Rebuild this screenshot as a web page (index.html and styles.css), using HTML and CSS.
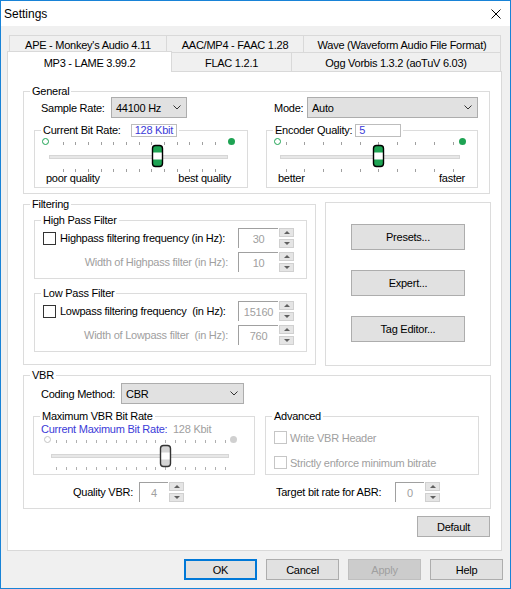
FILE: index.html
```html
<!DOCTYPE html>
<html>
<head>
<meta charset="utf-8">
<title>Settings</title>
<link rel="stylesheet" href="styles.css">
</head>
<body>
<div class="window">
  <div class="titlebar">
    <span class="title">Settings</span>
    <svg class="close" viewBox="0 0 10 10"><path d="M0.5 0.5L9.5 9.5M9.5 0.5L0.5 9.5" stroke="#000" stroke-width="1" fill="none"/></svg>
  </div>
  <div class="body">
    <div class="tabs">
      <div class="tabrow back">
        <div class="tab t-ape">APE - Monkey's Audio 4.11</div>
        <div class="tab t-aac">AAC/MP4 - FAAC 1.28</div>
        <div class="tab t-wave">Wave (Waveform Audio File Format)</div>
      </div>
      <div class="tabrow front">
        <div class="tab sel t-mp3">MP3 - LAME 3.99.2</div>
        <div class="tab t-flac">FLAC 1.2.1</div>
        <div class="tab t-ogg">Ogg Vorbis 1.3.2 (aoTuV 6.03)</div>
      </div>
    </div>

    <div class="panel">
      <div class="group g-general">
        <div class="legend">General</div>
        <div class="gen-grid">
          <div class="field">
            <span class="lbl l-sample">Sample Rate:</span>
            <div class="combo c-sample"><span>44100 Hz</span><svg class="chev" viewBox="0 0 8 5"><path d="M0.5 0.5L4 4L7.5 0.5" stroke="#333" fill="none"/></svg></div>
          </div>
          <div class="field">
            <span class="lbl l-mode">Mode:</span>
            <div class="combo c-mode"><span>Auto</span><svg class="chev" viewBox="0 0 8 5"><path d="M0.5 0.5L4 4L7.5 0.5" stroke="#333" fill="none"/></svg></div>
          </div>

          <div class="group sub g-bitrate">
            <div class="legend"><span class="leg-l1">Current Bit Rate:</span><span class="valbox vb-rate">128 Kbit</span></div>
            <svg class="slider" width="211" height="36" viewBox="0 0 211 36">
              <circle cx="10.5" cy="4.5" r="3" fill="none" stroke="#1ea353"/>
              <circle cx="196.5" cy="4.5" r="3.5" fill="#1ea353"/>
              <path d="M28.5 5v3M40.5 5v3M53.5 5v3M66.5 5v3M78.5 5v3M91.5 5v3M104.5 5v3M116.5 5v3M129.5 5v3M142.5 5v3M154.5 5v3M167.5 5v3M180.5 5v3" stroke="#a0a0a0"/>
              <path d="M28.5 32v3M40.5 32v3M53.5 32v3M66.5 32v3M78.5 32v3M91.5 32v3M104.5 32v3M116.5 32v3M129.5 32v3M142.5 32v3M154.5 32v3M167.5 32v3M180.5 32v3" stroke="#a0a0a0"/>
              <rect x="14.5" y="18.5" width="178" height="3" fill="#e7e7e7" stroke="#d6d6d6"/>
              <g transform="translate(117.5 8.5)">
                <rect width="10" height="21" rx="3" fill="#fff"/>
                <path d="M0 7V3a3 3 0 0 1 3-3h4a3 3 0 0 1 3 3v4z" fill="#1ea353"/>
                <path d="M0 14v4a3 3 0 0 0 3 3h4a3 3 0 0 0 3-3v-4z" fill="#1ea353"/>
                <rect width="10" height="21" rx="3" fill="none" stroke="#000" stroke-width="1.4"/>
              </g>
            </svg>
            <div class="slabels sl-left"><span>poor quality</span><span>best quality</span></div>
          </div>

          <div class="group sub g-enc">
            <div class="legend"><span>Encoder Quality:</span><span class="valbox vb-enc">5</span></div>
            <svg class="slider" width="209" height="36" viewBox="0 0 209 36">
              <circle cx="10.5" cy="4.5" r="3" fill="none" stroke="#1ea353"/>
              <circle cx="195.5" cy="4.5" r="3.5" fill="#1ea353"/>
              <path d="M19.5 5v3M37.5 5v3M56.5 5v3M74.5 5v3M93.5 5v3M111.5 5v3M130.5 5v3M148.5 5v3M167.5 5v3M186.5 5v3" stroke="#a0a0a0"/>
              <path d="M19.5 32v3M37.5 32v3M56.5 32v3M74.5 32v3M93.5 32v3M111.5 32v3M130.5 32v3M148.5 32v3M167.5 32v3M186.5 32v3" stroke="#a0a0a0"/>
              <rect x="13.5" y="18.5" width="179" height="3" fill="#e7e7e7" stroke="#d6d6d6"/>
              <g transform="translate(106.5 8.5)">
                <rect width="10" height="21" rx="3" fill="#fff"/>
                <path d="M0 7V3a3 3 0 0 1 3-3h4a3 3 0 0 1 3 3v4z" fill="#1ea353"/>
                <path d="M0 14v4a3 3 0 0 0 3 3h4a3 3 0 0 0 3-3v-4z" fill="#1ea353"/>
                <rect width="10" height="21" rx="3" fill="none" stroke="#000" stroke-width="1.4"/>
              </g>
            </svg>
            <div class="slabels sl-right"><span>better</span><span>faster</span></div>
          </div>
        </div>
      </div>

      <div class="mid">
        <div class="group g-filter">
          <div class="legend">Filtering</div>
          <div class="group sub-f hp">
            <div class="legend">High Pass Filter</div>
            <div class="frow first">
              <div class="chk-label"><span class="cb"></span><span>Highpass filtering frequency (in Hz):</span></div>
              <div class="spin"><div class="edit">30</div><div class="spinbtns"><span class="up"></span><span class="dn"></span></div></div>
            </div>
            <div class="frow">
              <div class="rlabel dim">Width of Highpass filter (in Hz):</div>
              <div class="spin"><div class="edit">10</div><div class="spinbtns"><span class="up"></span><span class="dn"></span></div></div>
            </div>
          </div>
          <div class="group sub-f lp">
            <div class="legend">Low Pass Filter</div>
            <div class="frow first">
              <div class="chk-label"><span class="cb"></span><span>Lowpass filtering frequency&nbsp; (in Hz):</span></div>
              <div class="spin"><div class="edit">15160</div><div class="spinbtns"><span class="up"></span><span class="dn"></span></div></div>
            </div>
            <div class="frow">
              <div class="rlabel dim">Width of Lowpass filter&nbsp; (in Hz):</div>
              <div class="spin"><div class="edit">760</div><div class="spinbtns"><span class="up"></span><span class="dn"></span></div></div>
            </div>
          </div>
        </div>

        <div class="group g-buttons">
          <div class="btn bigbtn">Presets...</div>
          <div class="btn bigbtn">Expert...</div>
          <div class="btn bigbtn">Tag Editor...</div>
        </div>
      </div>

      <div class="group g-vbr">
        <div class="legend">VBR</div>
        <div class="coding">
          <span class="lbl l-coding">Coding Method:</span>
          <div class="combo c-coding"><span>CBR</span><svg class="chev" viewBox="0 0 8 5"><path d="M0.5 0.5L4 4L7.5 0.5" stroke="#333" fill="none"/></svg></div>
        </div>
        <div class="vgrid">
          <div class="group g-maxvbr">
            <div class="legend">Maximum VBR Bit Rate</div>
            <div class="curmax"><span class="blue">Current Maximum Bit Rate:</span><span class="dim">128 Kbit</span></div>
            <svg class="slider" width="219" height="36" viewBox="0 0 219 36">
              <circle cx="13.5" cy="3.5" r="3" fill="none" stroke="#c4c4c4"/>
              <circle cx="199.5" cy="3.5" r="3.5" fill="#d0d0d0"/>
              <path d="M22.5 4v3M32.5 4v3M42.5 4v3M52.5 4v3M62.5 4v3M72.5 4v3M82.5 4v3M92.5 4v3M102.5 4v3M112.5 4v3M121.5 4v3M131.5 4v3M141.5 4v3M151.5 4v3M161.5 4v3M171.5 4v3M181.5 4v3M191.5 4v3" stroke="#b0b0b0"/>
              <path d="M22.5 31v3M32.5 31v3M42.5 31v3M52.5 31v3M62.5 31v3M72.5 31v3M82.5 31v3M92.5 31v3M102.5 31v3M112.5 31v3M121.5 31v3M131.5 31v3M141.5 31v3M151.5 31v3M161.5 31v3M171.5 31v3M181.5 31v3M191.5 31v3" stroke="#b0b0b0"/>
              <rect x="17.5" y="18.5" width="177" height="3" fill="#e7e7e7" stroke="#d6d6d6"/>
              <g transform="translate(126.5 9.5)">
                <rect width="10" height="21" rx="3" fill="#fff"/>
                <path d="M0 7V3a3 3 0 0 1 3-3h4a3 3 0 0 1 3 3v4z" fill="#d4d4d4"/>
                <path d="M0 14v4a3 3 0 0 0 3 3h4a3 3 0 0 0 3-3v-4z" fill="#d4d4d4"/>
                <rect width="10" height="21" rx="3" fill="none" stroke="#333" stroke-width="1.4"/>
              </g>
            </svg>
          </div>
          <div class="group g-adv">
            <div class="legend">Advanced</div>
            <div class="adv-rows">
              <div class="adv-row"><span class="cb dis"></span><span>Write VBR Header</span></div>
              <div class="adv-row"><span class="cb dis"></span><span>Strictly enforce minimum bitrate</span></div>
            </div>
          </div>
        </div>
        <div class="vbottom">
          <div class="qv">
            <span class="lbl l-qv">Quality VBR:</span>
            <div class="spin"><div class="edit small">4</div><div class="spinbtns"><span class="up"></span><span class="dn"></span></div></div>
          </div>
          <div class="abr">
            <span class="lbl l-abr">Target bit rate for ABR:</span>
            <div class="spin"><div class="edit small">0</div><div class="spinbtns"><span class="up"></span><span class="dn"></span></div></div>
          </div>
        </div>
      </div>

      <div class="defrow"><div class="btn dlgbtn">Default</div></div>
    </div>

    <div class="dlg">
      <div class="btn dlgbtn ok">OK</div>
      <div class="btn dlgbtn">Cancel</div>
      <div class="btn dlgbtn disabled">Apply</div>
      <div class="btn dlgbtn">Help</div>
    </div>
  </div>
</div>
</body>
</html>
```

FILE: styles.css
```css
* { box-sizing: border-box; }
html, body { margin: 0; padding: 0; background: #f0f0f0; }
body {
  font-family: "Liberation Sans", Arial, sans-serif;
  font-size: 11px;
  letter-spacing: -0.25px;
  color: #000;
}
.window {
  width: 511px;
  height: 589px;
  border: 1px solid #1883d7;
  background: #f0f0f0;
  overflow: hidden;
}
.titlebar {
  height: 25px;
  background: #fff;
  display: flex;
  align-items: center;
  justify-content: space-between;
  padding: 0 9px 0 3px;
}
.title { font-size: 12px; letter-spacing: 0; }
.close { width: 10px; height: 10px; display: block; }

.body { padding: 9px 0 0 6px; }

/* tabs */
.tabs { width: 495px; }
.tabrow { display: flex; }
.tabrow.back { padding-left: 2px; }
.tab {
  border: 1px solid #d9d9d9;
  background: #f0f0f0;
  display: flex;
  align-items: center;
  justify-content: center;
  white-space: nowrap;
}
.tab + .tab { margin-left: -1px; }
.back .tab { height: 18px; padding-top: 1px; }
.front { margin-top: -2px; align-items: flex-end; }
.front .tab { height: 19px; border-bottom: none; padding-top: 1px; }
.front .tab.sel {
  height: 21px;
  background: #fff;
  margin-bottom: -1px;
  position: relative;
  z-index: 1;
}
.t-ape { width: 158px; }
.t-aac { width: 138px; }
.t-wave { width: 198px; }
.t-mp3 { width: 165px; }
.t-flac { width: 121px; }
.t-ogg { width: 210px; }

/* panel */
.panel {
  width: 495px;
  height: 480px;
  border: 1px solid #d9d9d9;
  background: #fff;
  padding: 19px 0 0 15px;
}

/* group boxes */
.group { border: 1px solid #dcdcdc; }
.legend {
  display: flex;
  align-items: center;
  width: max-content;
  height: 14px;
  line-height: 14px;
  margin: -8px 0 0 6px;
  padding: 0 2px;
  background: #fff;
  white-space: nowrap;
}

.g-general { width: 467px; height: 103px; }
.gen-grid {
  display: grid;
  grid-template-columns: 214px 212px;
  grid-template-rows: 21px 58px;
  column-gap: 18px;
  row-gap: 12px;
  margin-top: -1px;
  padding-left: 10px;
}
.field { display: flex; align-items: center; }
.lbl { white-space: nowrap; }
.l-sample { padding-left: 7px; width: 77px; }
.l-mode { padding-left: 8px; width: 41px; }

.combo {
  height: 21px;
  border: 1px solid #adadad;
  background: #e1e1e1;
  display: flex;
  align-items: center;
  justify-content: space-between;
  padding: 0 5px 0 4px;
}
.chev { width: 8px; height: 5px; display: block; }
.c-sample { width: 76px; }
.c-mode { width: 171px; }
.c-coding { width: 123px; }

.sub { height: 58px; }
.valbox {
  height: 13px;
  line-height: 11px;
  border: 1px solid #bdbdbd;
  color: #3b3bd8;
  width: 46px;
  padding-left: 3px;
  background: #fff;
  white-space: nowrap;
  overflow: hidden;
}
.vb-rate { margin-left: 10px; }
.vb-enc { margin-left: 3px; }

.slider { display: block; }
.slabels {
  display: flex;
  justify-content: space-between;
  line-height: 13px;
  height: 13px;
  margin-top: -1px;
}
.sl-left { padding: 0 16px 0 11px; }
.sl-right { padding: 0 12px 0 11px; }

/* middle row */
.mid { display: flex; align-items: flex-start; gap: 9px; }
.g-filter { width: 293px; height: 161px; margin-top: 10px; }
.sub-f { width: 273px; height: 59px; margin-left: 10px; }
.hp { margin-top: 9px; }
.lp { margin-top: 14px; }
.frow {
  display: grid;
  grid-template-columns: 203px auto;
  height: 20px;
  align-items: center;
}
.frow.first { margin-top: 1px; }
.frow + .frow { margin-top: 4px; }
.chk-label { display: flex; align-items: center; padding-left: 8px; white-space: nowrap; }
.cb {
  width: 13px;
  height: 13px;
  border: 1px solid #333;
  background: #fff;
  margin-right: 4px;
  flex: none;
}
.cb.dis { border-color: #c6c6c6; margin-right: 3px; }
.dim { color: #a0a0a0; }
.rlabel { text-align: right; padding-right: 10px; white-space: nowrap; }

.spin { display: flex; height: 20px; }
.edit {
  width: 40px;
  height: 20px;
  border-top: 1px solid #a0a0a0;
  border-left: 1px solid #a0a0a0;
  display: flex;
  align-items: center;
  justify-content: center;
  color: #a0a0a0;
  background: #fff;
}
.edit.small { width: 29px; }
.spinbtns {
  margin-left: 1px;
  width: 15px;
  display: flex;
  flex-direction: column;
  justify-content: space-between;
}
.spinbtns span {
  height: 9px;
  background: #e5e5e5;
  border: 1px solid #d0d0d0;
  display: flex;
  align-items: center;
  justify-content: center;
}
.spinbtns span::after {
  content: "";
  width: 0;
  height: 0;
  border-left: 3px solid transparent;
  border-right: 3px solid transparent;
}
.spinbtns .up::after { border-bottom: 3px solid #606060; }
.spinbtns .dn::after { border-top: 3px solid #606060; }

.g-buttons {
  width: 166px;
  height: 164px;
  margin-top: 8px;
  padding: 21px 0 0 25px;
  display: flex;
  flex-direction: column;
  gap: 20px;
}
.btn {
  border: 1px solid #adadad;
  background: #e1e1e1;
  display: flex;
  align-items: center;
  justify-content: center;
  color: #000;
  white-space: nowrap;
}
.bigbtn { width: 114px; height: 26px; }

/* VBR */
.g-vbr { width: 468px; height: 134px; margin-top: 9px; }
.coding { display: flex; align-items: center; margin-top: 1px; padding-left: 17px; height: 21px; }
.l-coding { width: 80px; }
.vgrid {
  display: grid;
  grid-template-columns: 222px 214px;
  column-gap: 10px;
  margin: 12px 0 0 9px;
}
.g-maxvbr, .g-adv { height: 59px; }
.curmax { height: 13px; line-height: 13px; padding-left: 7px; display: flex; white-space: nowrap; }
.curmax .blue { color: #3b3bd8; width: 132px; }
.adv-rows { padding: 8px 0 0 8px; display: flex; flex-direction: column; gap: 12px; }
.adv-row { display: flex; align-items: center; height: 13px; color: #a0a0a0; white-space: nowrap; }
.vbottom {
  display: grid;
  grid-template-columns: 222px 214px;
  column-gap: 10px;
  margin: 7px 0 0 9px;
}
.qv, .abr { display: flex; align-items: center; }
.l-qv { width: 100px; text-align: right; margin-right: 6px; }
.l-abr { padding-left: 11px; width: 130px; }

.defrow { display: flex; justify-content: flex-end; margin-top: 7px; padding-right: 11px; }
.dlgbtn { width: 73px; height: 21px; }

.dlg {
  display: flex;
  justify-content: flex-end;
  gap: 9px;
  margin-top: 8px;
  width: 496px;
}
.dlgbtn.ok { border: 2px solid #0078d7; }
.dlgbtn.disabled { background: #cccccc; border-color: #bfbfbf; color: #a0a0a0; }
```
